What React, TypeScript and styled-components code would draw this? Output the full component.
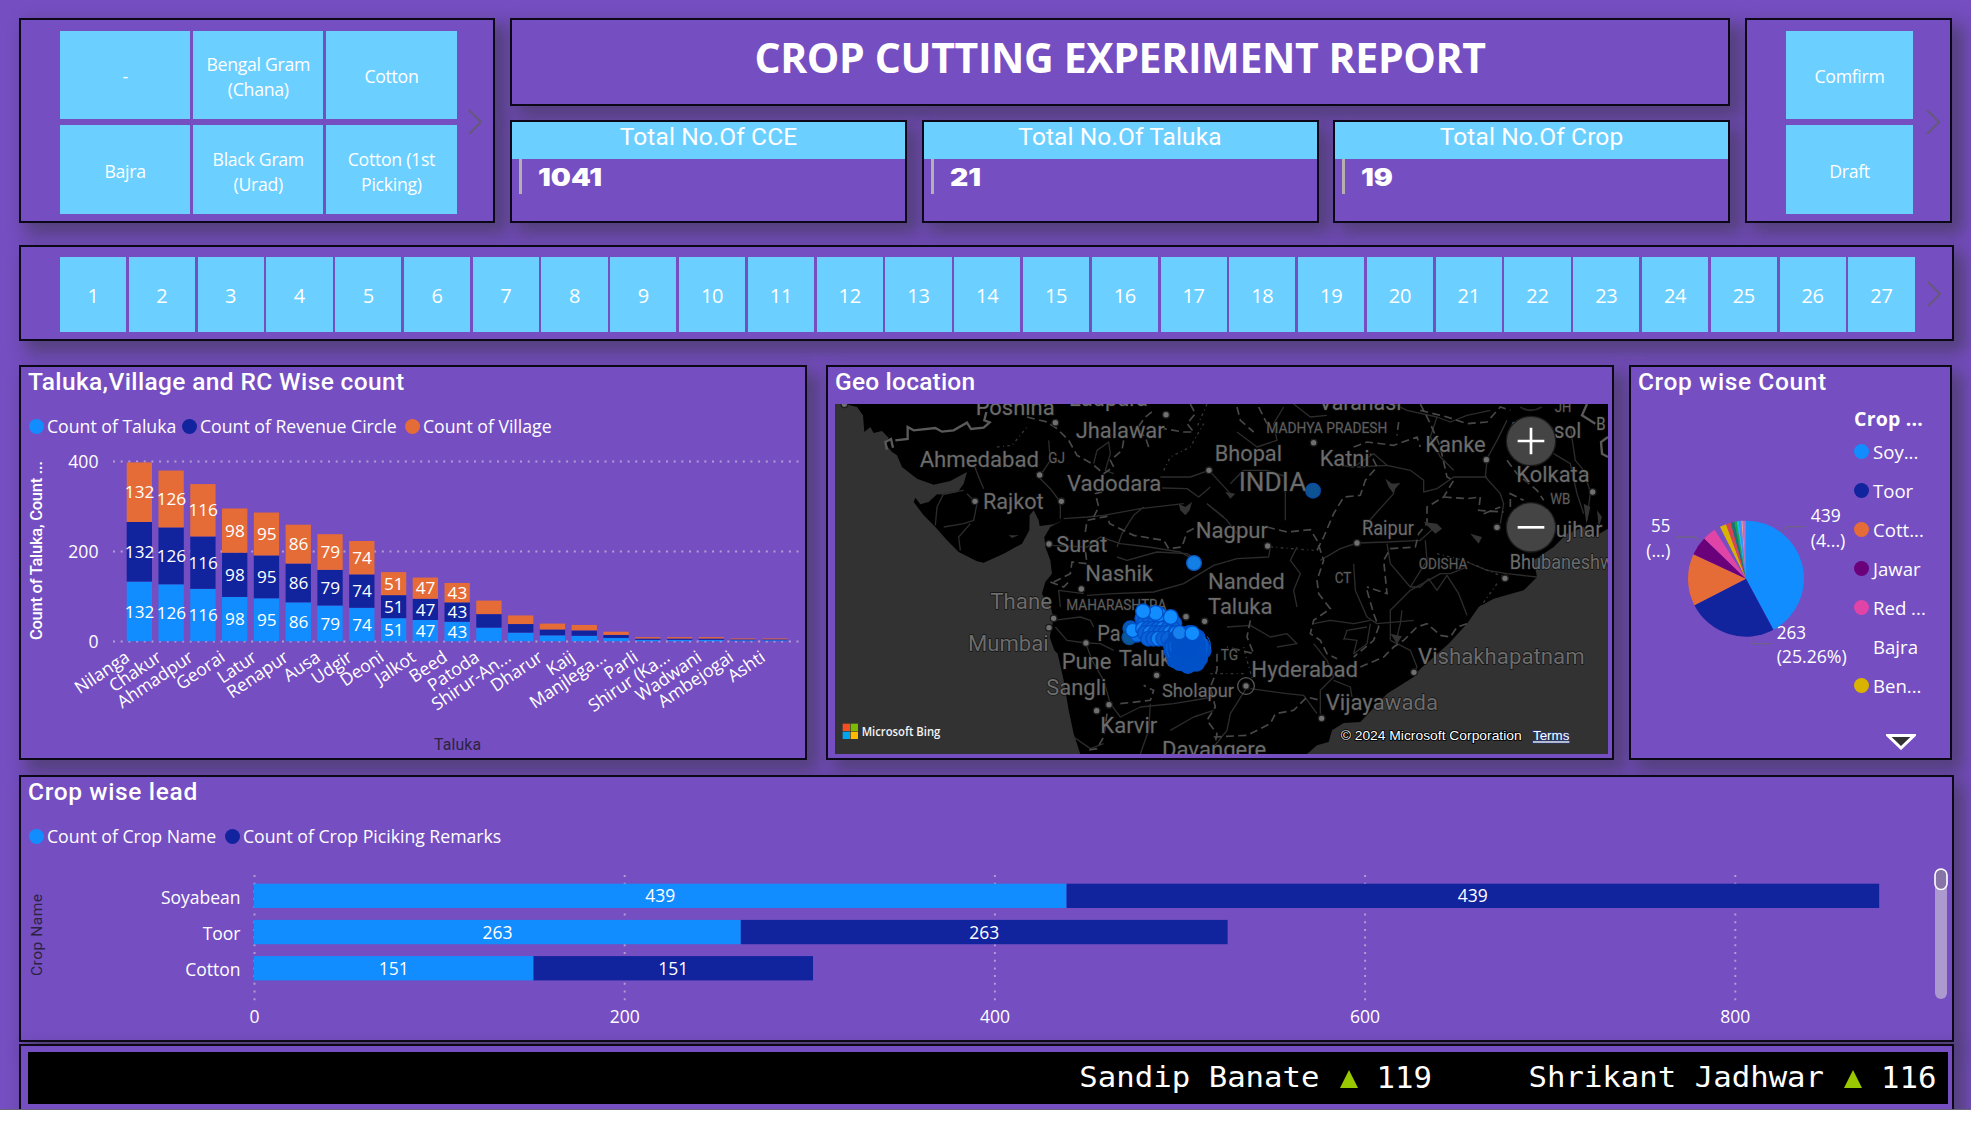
import React from "react";
import styled, { createGlobalStyle } from "styled-components";

const PURPLE = "#754ec1";
const TILE = "#6bcfff";
const BLUE = "#118dff";
const NAVY = "#12239e";
const ORANGE = "#e66c37";
const UI = '"Open Sans", "Noto Sans", sans-serif';
const DIN = 'Roboto, "Liberation Sans", sans-serif';
const MONO = '"DejaVu Sans Mono", monospace';

const Global = createGlobalStyle`
  body { margin: 0; background: #fff; }
  * { box-sizing: border-box; }
`;

const Page = styled.main`
  width: 1971px;
  height: 1109.5px;
  padding: 18px 17px 0 19px;
  display: flex;
  flex-direction: column;
  overflow: hidden;
  background: ${PURPLE};
  border-bottom: 1px solid #68627a;
  font-family: ${UI};
  color: #fff;
`;

const Panel = styled.section<{ $w?: number; $h?: number }>`
  width: ${(p) => (p.$w ? `${p.$w}px` : "auto")};
  height: ${(p) => (p.$h ? `${p.$h}px` : "auto")};
  flex: none;
  background: ${PURPLE};
  border: 2px solid #0d0818;
  box-shadow: 9px 9px 16px 3px rgba(50, 50, 50, 0.48);
`;

const TopRow = styled.div`
  display: flex;
  gap: 15px;
  height: 205px;
  margin-bottom: 22px;
`;

const SlicerPanel = styled(Panel)<{ $pad: string }>`
  display: flex;
  align-items: center;
  padding: ${(p) => p.$pad};
`;

const TileGrid = styled.div<{ $cols: number; $gap: string }>`
  display: grid;
  flex: 1;
  height: 100%;
  grid-template-columns: repeat(${(p) => p.$cols}, 1fr);
  gap: ${(p) => p.$gap};
`;

const Tile = styled.button<{ $size: number; $drop: number }>`
  border: 0;
  padding: ${(p) => p.$drop}px 7px 0;
  min-width: 0;
  background: ${TILE};
  color: #fff;
  font: 400 ${(p) => p.$size}px/25px ${UI};
  letter-spacing: -0.3px;
`;

const ChevronSlot = styled.span<{ $ml: number }>`
  display: flex;
  width: 14px;
  margin-left: ${(p) => p.$ml}px;
`;

const Middle = styled.div`
  width: 1220px;
  display: flex;
  flex-direction: column;
  gap: 14px;
`;

const Banner = styled(Panel)`
  display: flex;
  justify-content: center;
`;

const BannerTitle = styled.h1`
  margin: 9.5px 0 0;
  font: 700 41px/54px ${UI};
  letter-spacing: -0.37px;
  white-space: nowrap;
`;

const Cards = styled.div`
  display: flex;
  justify-content: space-between;
`;

const CardHead = styled.h2`
  margin: 0;
  height: 37px;
  background: ${TILE};
  text-align: center;
  font: 400 24.5px/29px ${DIN};
  letter-spacing: 0.1px;
`;

const CardBody = styled.div`
  margin-left: 7px;
  height: 35px;
  border-left: 3px solid #b3b0ad;
  padding-left: 16px;
  font: 900 24px/37px Inter, ${UI};
`;

const CardValue = styled.span`
  display: inline-block;
  transform: scaleX(1.18);
  transform-origin: left;
`;

const ReportRow = styled.div`
  display: flex;
  height: 395px;
  margin: 24px 0 15px;
`;

const ReportPanel = styled(Panel)<{ $ml?: number }>`
  display: flex;
  flex-direction: column;
  margin-left: ${(p) => p.$ml ?? 0}px;
`;

const PanelTitle = styled.h2<{ $ls?: number }>`
  margin: 0 0 0 7px;
  height: 36px;
  font: 500 24.5px/29px ${DIN};
  letter-spacing: ${(p) => p.$ls ?? 0.37}px;
  white-space: nowrap;
`;

const Legend = styled.div`
  display: flex;
  height: 42px;
  margin-left: 8px;
  padding-top: 4px;
  gap: 9px;
  font-size: 17.7px;
  line-height: 24px;
  white-space: nowrap;
`;

const Key = styled.span<{ $w?: number }>`
  display: flex;
  align-items: center;
  gap: 3px;
  letter-spacing: -0.02px;
  width: ${(p) => (p.$w ? `${p.$w}px` : "auto")};
`;

const Dot = styled.i<{ $c: string }>`
  width: 15px;
  height: 15px;
  border-radius: 50%;
  flex: none;
  background: ${(p) => p.$c};
`;

const Chart = styled.svg`
  display: block;
  flex: none;
  font-family: ${UI};
`;

const PieBody = styled.div`
  display: flex;
  flex: 1;
`;

const PieLegend = styled.div`
  display: flex;
  flex-direction: column;
  width: 96px;
  padding-top: 2px;
  font-size: 18.6px;
`;

const PieLegendTitle = styled.strong`
  font: 700 19.5px/28px ${UI};
  height: 31px;
  letter-spacing: 0.2px;
`;

const PieKey = styled.span`
  display: flex;
  align-items: center;
  gap: 4px;
  height: 39.1px;
  padding-bottom: 9px;
`;

const More = styled.svg`
  margin: 24px 0 0 32px;
`;

const MapFrame = styled.div`
  width: 773px;
  height: 350px;
  margin: 0.5px 0 0 7px;
  background: #323232;
`;

const TickerPanel = styled(Panel)`
  margin-top: 1.5px;
  padding: 6.5px 4.5px 0 6.5px;
`;

const TickerBand = styled.div`
  display: flex;
  justify-content: flex-end;
  align-items: center;
  height: 52px;
  padding-right: 11px;
  background: #000;
`;

const TickerItem = styled.div`
  display: flex;
  align-items: center;
  margin-left: 96.5px;
  white-space: pre;
`;

const TickerName = styled.span`
  font: 30.7px/44px ${MONO};
  transform: scaleY(0.94);
`;

const TickerArrow = styled.i`
  margin: 2px 19px 0 20px;
  border: 9px solid transparent;
  border-top: 0;
  border-bottom: 18px solid #99c700;
`;

const TickerValue = styled.span`
  font: 30.7px/44px ${MONO};
`;

const Chevron = () => (
  <svg width="14" height="26" viewBox="0 0 14 26" fill="none" stroke="#66597c" strokeWidth="2">
    <path d="M1 1 L13 13 L1 25" />
  </svg>
);

const crops = ["-", "Bengal Gram (Chana)", "Cotton", "Bajra", "Black Gram (Urad)", "Cotton (1st Picking)"];
const cards: [string, string][] = [
  ["Total No.Of CCE", "1041"],
  ["Total No.Of Taluka", "21"],
  ["Total No.Of Crop", "19"],
];

const talukas: [string, number][] = [
  ["Nilanga", 132], ["Chakur", 126], ["Ahmadpur", 116], ["Georai", 98], ["Latur", 95], ["Renapur", 86],
  ["Ausa", 79], ["Udgir", 74], ["Deoni", 51], ["Jalkot", 47], ["Beed", 43], ["Patoda", 30],
  ["Shirur-An...", 19], ["Dharur", 13], ["Kaij", 12], ["Manjlega...", 7], ["Parli", 3], ["Shirur (Ka...", 3],
  ["Wadwani", 3], ["Ambejogai", 2], ["Ashti", 2],
];

const ColumnChart = () => {
  const k = 0.4515;
  return (
    <Chart width="784" height="313" viewBox="21 445 784 313" fill="#fff">
      {[400, 200, 0].map((v) => {
        const y = 641.6 - v * 0.45;
        return (
          <g key={v}>
            <line x1="113" x2="801" y1={y} y2={y} stroke="#b29fd2" strokeWidth="2" strokeDasharray="2 5.68" />
            <text x="98.5" y={y + 6.2} textAnchor="end" fontSize="17.6">{v}</text>
          </g>
        );
      })}
      {talukas.map(([name, n], i) => {
        const x = 126.7 + i * 31.78;
        const h = n * k;
        return (
          <g key={name}>
            {[BLUE, NAVY, ORANGE].map((c, j) => (
              <g key={c}>
                <rect x={x} y={641.2 - h * (j + 1)} width="25.3" height={h} fill={c} />
                {n > 40 && (
                  <text x={x + 12.9} y={641.2 - h * (j + 0.5) + 6.2} textAnchor="middle" fontSize="17.2">{n}</text>
                )}
              </g>
            ))}
            <text transform={`translate(${x + 4.2} 660) rotate(-34)`} textAnchor="end" fontSize="17.5">{name}</text>
          </g>
        );
      })}
      <text transform="translate(42 640) rotate(-90)" fontFamily={DIN} fontWeight="500" fontSize="16.5" textLength="179">Count of Taluka, Count ...</text>
      <text x="434" y="750" fontFamily={DIN} fontSize="15.8" textLength="47" fill="#2c2340">Taluka</text>
    </Chart>
  );
};

type Label = [string, number, number, number, number?];
const mapLabels: Label[] = [
  ["Poshina", 468, 163, 237], ["Ladpura", 748, 138, 237], ["Jhalawar", 768, 233, 267],
  ["Ahmedabad", 300, 320, 358], ["GJ", 686, 308, 50, 42], ["Rajkot", 490, 446, 182],
  ["Vadodara", 742, 393, 283], ["Surat", 710, 574, 153], ["Nashik", 797, 661, 203],
  ["Thane", 512, 746, 185], ["MAHARASHTRA", 740, 750, 300, 42], ["Mumbai", 445, 871, 242],
  ["Pa", 833, 842, 70], ["Pune", 726, 925, 149], ["Taluka", 897, 916, 193], ["Sangli", 680, 1003, 180],
  ["Karvir", 842, 1119, 171], ["Sholapur", 1027, 1010, 216, 54], ["Davangere", 1027, 1190, 313],
  ["Varanasi", 1497, 150, 248], ["MADHYA PRADESH", 1340, 219, 363, 42], ["Bhopal", 1185, 301, 202],
  ["Katni", 1500, 316, 150], ["Kanke", 1817, 274, 181], ["Asansol", 2062, 234, 223], ["JH", 2205, 155, 50, 42],
  ["B", 2330, 208, 28, 52], ["INDIA", 1257, 393, 203, 74], ["Kolkata", 2090, 366, 220], ["WB", 2192, 430, 60, 42],
  ["Nagpur", 1128, 533, 217], ["Raipur", 1627, 524, 156, 58], ["ujhar", 2208, 529, 140],
  ["Bhubaneshwar", 2070, 627, 360, 58], ["ODISHA", 1797, 626, 146, 42], ["CT", 1545, 667, 50, 42],
  ["Nanded", 1165, 686, 230], ["Taluka", 1165, 760, 193], ["TG", 1203, 900, 52, 42],
  ["Hyderabad", 1295, 950, 320], ["Vijayawada", 1518, 1050, 337], ["Vishakhapatnam", 1795, 912, 500],
];

const towns = [
  [1037, 163], [705, 187], [658, 344], [464, 423], [723, 423], [686, 551], [783, 686], [700, 774], [686, 802],
  [797, 848], [1009, 945], [866, 1033], [829, 1051], [1166, 330], [1097, 769], [1153, 783], [72, 132], [1480, 247],
  [1998, 298], [2317, 395], [1342, 557], [1610, 548], [2030, 501], [2054, 654], [1277, 977], [1781, 936], [1504, 1074],
];

const stateBorders = [
  "M620 170 L680 185 L710 205 L745 240 L770 285 L815 310 L850 340 L880 320 L870 300 L905 270 L910 240",
  "M985 260 L975 230 L950 205 L975 170 L1000 150 M1110 131 L1125 160 L1100 190 L1120 215 L1090 215 L1030 205",
  "M820 470 L835 440 L825 400 L845 395 M795 515 L800 480 L860 468 L868 490 L940 525 L1030 540 L1045 565 L1085 560 L1100 515 L1130 500",
  "M700 665 L750 640 L755 605 L800 610 L795 570 M690 665 L730 680 L745 665",
  "M1340 500 L1400 515 L1470 508 L1490 540 L1510 600 L1490 660 L1495 700 L1530 745 L1480 780 L1470 820 L1500 840 L1520 880 L1550 895",
  "M1490 570 L1510 530 L1540 460 L1570 410 L1620 405 L1635 360 L1670 320 L1650 280",
  "M1600 260 L1640 245 L1720 255 L1790 230 L1800 260 M1735 185 L1730 225 M1250 140 L1260 180 L1300 215 M1315 140 L1340 190",
  "M1800 131 L1830 190 L1860 260 L1880 350 L1900 360 L1870 410 L1820 440 L1820 490 L1795 520 L1785 560 L1710 565 L1690 600 L1700 700 L1640 680",
  "M1870 410 L1940 415 L1980 410 L1975 450 L2050 455 M1990 460 L2040 440 M2070 440 L2070 400 L2110 420 M1640 690 L1660 760 L1675 800 L1660 840 L1600 890",
  "M1620 920 L1690 890 L1720 860 L1750 840 L1790 800 L1820 790 L1860 825 L1890 830 L1910 800 L1940 790",
  "M1290 780 L1280 830 L1300 880 L1260 870 L1220 860 M1190 880 L1190 930 L1170 980 L1185 1040 L1160 1080 L1190 1120 L1180 1170",
  "M900 1030 L990 1020 L1000 990 L970 975 M860 1060 L850 1130 L830 1165 L800 1170 M1180 1130 L1280 1125 L1350 1090 L1365 1060 L1420 1050 L1460 1010 L1500 1020",
  "M1800 150 L1880 170 L1940 190 L2000 185 L2040 140 L2070 150 M2060 300 L2090 340 L2150 390 L2170 420",
];

const roads = [
  "M655 350 L690 385 L720 425 L720 475 M460 310 L475 350 L490 385 M685 240 L690 300 L660 345",
  "M345 495 L350 440 L370 400 L430 390 M370 500 L430 490 L460 480 L470 430 L440 400 M420 570 L415 530 L450 490",
  "M820 310 L830 270 L865 245 L870 280 L855 330 L880 340 M1166 330 L1110 350 L1020 350 M1025 383 L1100 385 L1135 410 L1170 380",
  "M730 475 L800 470 L850 465 L960 445 L1090 430 M890 560 L905 520 L940 465 L970 440 M690 555 L800 560 L840 530 L900 550 L985 560 L1080 575 L1140 610",
  "M800 705 L880 700 L1000 695 L1090 670 L1180 615 L1250 595 L1345 590 L1350 560 M1160 430 L1220 480 L1250 520",
  "M700 780 L780 770 L810 780 L820 800 M705 800 L740 840 L797 848 L840 850 L880 870 M720 740 L715 690 L790 700",
  "M797 850 L815 900 L850 960 L870 1030 L900 1070 L960 1040 L1060 1030 L1180 1010 M990 1030 L985 1110 L960 1181 M760 1130 L810 1165 L850 1150",
  "M890 590 L920 600 L1010 575 L1100 580 L1130 600 M1050 1110 L1120 1070 L1180 1050",
  "M1230 370 L1270 330 L1340 330 L1400 350 M1395 370 L1395 480 M1166 330 L1230 400 M1340 330 L1345 390 M1160 430 L1210 470",
  "M1250 215 L1310 260 L1370 240 L1360 190 L1390 140 M1420 131 L1470 170 L1520 165 M1610 320 L1700 315 L1770 330 L1810 360 L1810 395 L1850 385 L1900 350 L2000 350",
  "M1700 315 L1660 280 L1600 320 L1560 315 M1630 500 L1670 455 L1720 400 L1715 370 M2000 300 L1995 350 L2040 400 L2050 430 L2040 490",
  "M1500 600 L1560 565 L1610 548 L1700 545 L1800 540 L1850 495 M1600 610 L1605 690 L1640 770 L1670 790 L1780 780 M1710 840 L1710 750 L1770 690 L1860 640 L1890 640 L1940 620",
  "M1700 550 L1710 610 L1770 680 L1800 680 L1825 655 L1850 690 L1880 645 L1915 700 L1940 765 M1815 540 L1820 600 L1770 680 M1940 605 L2000 630 L2060 640 L2150 650",
  "M1430 560 L1410 600 L1440 640 L1420 690 L1430 740 M1220 800 L1290 795 L1350 830 L1400 820 L1430 850 L1370 860 M1480 790 L1530 780 L1600 790 L1650 780",
  "M1480 850 L1520 900 L1540 950 L1500 990 L1500 1060 M1570 840 L1580 810 L1640 800 M1570 835 L1610 840 L1600 880 L1640 850 L1650 790 M1710 840 L1770 870 L1790 920 L1780 936",
  "M1290 985 L1400 1000 L1450 1005 L1490 1060 M1277 985 L1230 1060 L1220 1110 L1180 1160 M1540 960 L1590 980 L1595 1010 M1745 750 L1740 790 L1730 830",
  "M1850 170 L1890 185 L1940 165 L2010 150 M1720 131 L1760 150 L1850 170 L1830 230 L1860 290 L1900 330 M2060 180 L2030 240 L1998 298 M2250 200 L2265 300 L2290 330 L2310 395 L2300 480 M2200 280 L2250 310 L2270 400 L2290 460",
];

/* Field-visit markers: the Beed group row by row, then the denser Latur group as a disc. */
const beed: number[][] = [];
[[966, 1044, 772], [968, 1058, 788], [968, 1066, 804], [970, 1072, 818], [984, 1050, 832]].forEach(([from, to, y], r) => {
  for (let x = from; x <= to; x += 15) {
    beed.push([x + (r % 2) * 4, y + ((x * 7) % 5)]);
  }
});
const latur: number[][] = [];
for (let i = 0; i < 60; i += 1) {
  const a = i * 2.4;
  const r = Math.sqrt(i / 60) * 50;
  latur.push([1101 + Math.cos(a) * r, 868 + Math.sin(a) * r * 1.02]);
}

const GeoMap = () => (
  <Chart width="773" height="350" viewBox="44 131 2319 1050">
    <path
      fill="#000"
      d="M75 131 L110 140 L128 165 L132 215 L150 200 L160 218 L185 212 L205 232 L195 250 L215 275 L230 285 L245 320 L290 355 L340 373 L390 362 L440 335 L430 370 L412 395 L375 403 L350 402 L325 425 L300 432 L285 412 L280 425 L310 465 L345 500 L380 540 L415 575 L470 603 L490 607 L550 580 L605 550 L627 510 L628 465 L640 450 L655 480 L658 497 L700 492 L728 480 L690 500 L672 530 L675 560 L690 600 L695 640 L675 665 L665 700 L675 720 L690 735 L700 775 L688 830 L702 870 L712 880 L730 960 L745 1050 L760 1120 L780 1181 L1460 1181 L1490 1155 L1525 1145 L1535 1110 L1570 1088 L1620 1085 L1700 1000 L1780 950 L1800 925 L1885 850 L1940 790 L1975 740 L2020 715 L2110 690 L2150 650 L2140 600 L2200 560 L2240 520 L2290 500 L2320 530 L2363 505 L2363 131 Z"
    />
    <g fill="none" stroke="#2c2c2c" strokeWidth="4" strokeLinejoin="round">
      {roads.map((d) => <path key={d} d={d} />)}
      <path stroke="#363636" strokeDasharray="8 10 3 10" d="M530 260 L575 255 L620 200 M1030 330 L1050 290 L1110 260 L1150 190 M1160 131 L1130 200 M1350 560 L1480 570 M1270 940 L1170 940 M1300 970 L1280 900 L1270 860 M1850 580 L1930 600 L2050 650 M2030 670 L1980 740" />
    </g>
    <g fill="none" stroke="#484848" strokeWidth="5" strokeDasharray="24 13">
      {stateBorders.map((d) => <path key={d} d={d} />)}
    </g>
    <path fill="none" stroke="#5a5a5a" strokeWidth="7" d="M200 268 L195 245 L212 236 L218 262 M225 240 L262 236 L262 200 L280 210 L345 203 L365 214 L400 210 L440 187 L452 206 L490 202 L508 186 L492 180 L498 155 M2300 131 L2285 165 L2325 190 M2363 230 L2342 245 L2345 280 L2363 290" />
    <g fill="#333">
      <path d="M1075 430 L1095 440 L1115 425 L1108 450 L1095 465 L1080 450 Z M1695 355 L1715 370 L1740 368 L1725 385 L1720 400 L1705 380 Z M1810 485 L1850 490 L1865 505 L1845 520 L1830 505 Z M1950 520 L1985 530 L1975 550 Z M1215 395 L1245 400 L1230 415 Z M1710 820 L1745 828 L1730 850 Z M565 525 L595 525 L575 533 Z" />
      <path d="M2290 430 L2310 440 L2298 490 Z M2330 450 L2345 470 L2335 500 Z" />
    </g>
    <g stroke="#111" strokeWidth="4" paintOrder="stroke" strokeLinejoin="round" fontFamily={DIN}>
      {mapLabels.map(([t, x, y, w, s]) => (
        <text
          key={`${t}${x}`}
          x={x - 2}
          y={y}
          textLength={w}
          lengthAdjust="spacingAndGlyphs"
          fontSize={s ? s * 1.03 : 67}
          fill={s === 42 ? "#5e5e5e" : "#6c6c6c"}
        >
          {t}
        </text>
      ))}
    </g>
    <g fill="#707070" stroke="#1c1c1c" strokeWidth="4">
      {towns.map(([x, y]) => <circle key={`${x}-${y}`} cx={x} cy={y} r="10" />)}
    </g>
    <circle cx="1277" cy="977" r="25" fill="none" stroke="#555" strokeWidth="4" />
    <circle cx="1121" cy="608" r="22" fill="#137fe4" stroke="#0b59c6" strokeWidth="4" />
    <circle cx="1478" cy="391" r="22" fill="#0d5292" stroke="#0a4aa6" strokeWidth="4" />
    <g stroke="#0050c8" strokeWidth="4">
      <circle cx="930" cy="804" r="22" fill="#0d5ba6" />
      <circle cx="927" cy="831" r="22" fill="#0a5799" stroke="#07478f" />
      <circle cx="950" cy="824" r="21" fill="#0c6fe0" />
      <circle cx="937" cy="810" r="21" fill={BLUE} />
      {beed.map(([x, y], i) => <circle key={i} cx={x} cy={y} r="22" fill={i % 4 === 1 ? "#1180f0" : "#0a62d8"} />)}
      {[[1016, 762], [1051, 770], [1006, 758], [968, 753], [1068, 818]].map(([x, y]) => (
        <circle key={x} cx={x} cy={y} r="22" fill={BLUE} />
      ))}
      {latur.map(([x, y], i) => <circle key={i} cx={x} cy={y} r="23" fill="#0050c8" />)}
      <g fill="none" stroke="#0b66dc" strokeWidth="3">
        <path d="M1040 850 q-4 22 6 40 M1050 845 q-3 15 2 28 M1150 830 q16 18 8 44 M1160 828 q14 18 9 38" />
      </g>
      <circle cx="1077" cy="817" r="21" fill="#1580ee" />
      <circle cx="1116" cy="819" r="22" fill={BLUE} />
    </g>
    {[242, 501].map((y) => (
      <g key={y}>
        <circle cx="2132" cy={y} r="76" fill="#1c1c1c" />
        <circle cx="2132" cy={y} r="72" fill="#444" />
        <path d={`M2092 ${y} h80 ${y === 242 ? `M2132 ${y - 40} v80` : ""}`} stroke="#fff" strokeWidth="8" />
      </g>
    ))}
    <path d="M2100 140 q32 20 64 0" fill="none" stroke="#252525" strokeWidth="6" />
    <rect x="67" y="1090" width="22" height="22" fill="#f25022" />
    <rect x="91" y="1090" width="22" height="22" fill="#7fba00" />
    <rect x="67" y="1114" width="22" height="22" fill="#00a4ef" />
    <rect x="91" y="1114" width="22" height="22" fill="#ffb900" />
    <text x="124" y="1127" fontSize="39" fontWeight="600" textLength="236" lengthAdjust="spacingAndGlyphs" fill="#f4f4f4">Microsoft Bing</text>
    <g fontFamily='"Liberation Sans", sans-serif' fontSize="39" fill="#fff" stroke="#000" strokeWidth="5" paintOrder="stroke">
      <text x="1561" y="1140" textLength="543" lengthAdjust="spacingAndGlyphs">© 2024 Microsoft Corporation</text>
      <text x="2138" y="1140" textLength="109" lengthAdjust="spacingAndGlyphs" stroke="#2a3a78" textDecoration="underline">Terms</text>
    </g>
  </Chart>
);

const slices: [number, string][] = [
  [151.8, BLUE], [242.8, NAVY], [295, ORANGE], [313.9, "#6b007b"], [327.3, "#e044a7"], [333.3, "transparent"],
  [339.9, "#d9b300"], [344.8, "#d64550"], [348.4, "#197278"], [350.8, "#1aab40"], [353, "#15c6f4"],
  [355.3, "#4092ff"], [356.7, "#ee9e9e"], [358.9, "#c070c8"], [360, "#9a7f99"],
];

const PieChart = () => {
  const at = (deg: number) => {
    const a = (deg * Math.PI) / 180;
    return `${408 + 174 * Math.sin(a)} ${686 - 174 * Math.cos(a)}`;
  };
  return (
    <Chart width="223" height="355" viewBox="63 159 669 1065" fill="#fff" fontSize="52">
      {slices.map(([end, c], i) => (
        <path key={end} fill={c} d={`M408 686 L${at(i ? slices[i - 1][0] : 0)} A174 174 0 0 1 ${at(end)} Z`} />
      ))}
      <path d="M516 545 L530 530 H585 M198 561 H254 L270 573 M425 864 V881 H484" fill="none" stroke="#6f6288" strokeWidth="4" />
      <text x="602" y="516" textLength="90" lengthAdjust="spacingAndGlyphs">439</text>
      <text x="602" y="591" textLength="104" lengthAdjust="spacingAndGlyphs">(4...)</text>
      <text x="123" y="546" textLength="58" lengthAdjust="spacingAndGlyphs">55</text>
      <text x="109" y="621" textLength="72" lengthAdjust="spacingAndGlyphs">(...)</text>
      <text x="500" y="866" textLength="88" lengthAdjust="spacingAndGlyphs">263</text>
      <text x="500" y="940" textLength="210" lengthAdjust="spacingAndGlyphs">(25.26%)</text>
    </Chart>
  );
};

const pieKeys: [string, string][] = [
  ["Soy...", BLUE], ["Toor", NAVY], ["Cott...", ORANGE], ["Jawar", "#6b007b"], ["Red ...", "#e044a7"],
  ["Bajra", "transparent"], ["Ben...", "#d9b300"],
];

const LeadChart = () => (
  <Chart width="1930" height="185" viewBox="21 855 1930 185" fill="#fff" fontSize="17.5">
    {[0, 200, 400, 600, 800].map((v) => {
      const x = 254.5 + v * 1.851;
      return (
        <g key={v}>
          <line x1={x} x2={x} y1="875" y2="1001" stroke="#b09cd2" strokeWidth="2" strokeDasharray="2 5.7" />
          <text x={x} y="1022.5" textAnchor="middle">{v}</text>
        </g>
      );
    })}
    {([["Soyabean", 439], ["Toor", 263], ["Cotton", 151]] as [string, number][]).map(([name, n], i) => {
      const y = 883.7 + i * 36.2;
      const w = n * 1.851;
      return (
        <g key={name}>
          <text x="240.5" y={y + 20} textAnchor="end">{name}</text>
          <rect x="254" y={y} width={w} height="24.3" fill={BLUE} />
          <rect x={254 + w} y={y} width={w} height="24.3" fill={NAVY} />
          <text x={254 + w / 2} y={y + 18.7} textAnchor="middle">{n}</text>
          <text x={254 + w * 1.5} y={y + 18.7} textAnchor="middle">{n}</text>
        </g>
      );
    })}
    <text transform="translate(41.5 976) rotate(-90)" fontFamily={DIN} fontSize="15.5" textLength="82" fill="#2c2340">Crop Name</text>
    <rect x="1935" y="869" width="12" height="130" rx="6" fill="#ab99d0" />
    <rect x="1935" y="869" width="12" height="20.5" rx="6" fill="#8574a5" stroke="#fff" strokeWidth="1.6" />
  </Chart>
);

export default function App() {
  return (
    <>
      <Global />
      <Page>
        <TopRow>
          <SlicerPanel $w={476} $pad="10.5px 11px 7px 39px">
            <TileGrid $cols={3} $gap="6px 3px">
              {crops.map((c) => <Tile key={c} $size={17.7} $drop={4}>{c}</Tile>)}
            </TileGrid>
            <ChevronSlot $ml={11.5}><Chevron /></ChevronSlot>
          </SlicerPanel>
          <Middle>
            <Banner $h={88}>
              <BannerTitle>CROP CUTTING EXPERIMENT REPORT</BannerTitle>
            </Banner>
            <Cards>
              {cards.map(([label, value]) => (
                <Panel key={label} $w={397} $h={103}>
                  <CardHead>{label}</CardHead>
                  <CardBody><CardValue>{value}</CardValue></CardBody>
                </Panel>
              ))}
            </Cards>
          </Middle>
          <SlicerPanel $w={207} $pad="10.5px 10px 7px 39px">
            <TileGrid $cols={1} $gap="6px">
              {["Comfirm", "Draft"].map((c) => <Tile key={c} $size={17.7} $drop={4}>{c}</Tile>)}
            </TileGrid>
            <ChevronSlot $ml={13}><Chevron /></ChevronSlot>
          </SlicerPanel>
        </TopRow>

        <SlicerPanel $h={96} $pad="10px 11px 7.5px 39px">
          <TileGrid $cols={27} $gap="2.6px">
            {Array.from({ length: 27 }, (_, i) => <Tile key={i} $size={20} $drop={2}>{i + 1}</Tile>)}
          </TileGrid>
          <ChevronSlot $ml={12.5}><Chevron /></ChevronSlot>
        </SlicerPanel>

        <ReportRow>
          <ReportPanel $w={788} $h={395}>
            <PanelTitle>Taluka,Village and RC Wise count</PanelTitle>
            <Legend>
              <Key $w={144}><Dot $c={BLUE} />Count of Taluka</Key>
              <Key $w={214}><Dot $c={NAVY} />Count of Revenue Circle</Key>
              <Key><Dot $c={ORANGE} />Count of Village</Key>
            </Legend>
            <ColumnChart />
          </ReportPanel>
          <ReportPanel $w={788} $h={395} $ml={19}>
            <PanelTitle $ls={0.2}>Geo location</PanelTitle>
            <MapFrame><GeoMap /></MapFrame>
          </ReportPanel>
          <ReportPanel $w={323} $h={395} $ml={15}>
            <PanelTitle $ls={0.6}>Crop wise Count</PanelTitle>
            <PieBody>
              <PieChart />
              <PieLegend>
                <PieLegendTitle>Crop ...</PieLegendTitle>
                {pieKeys.map(([name, c]) => <PieKey key={name}><Dot $c={c} />{name}</PieKey>)}
                <More width="30" height="16" viewBox="0 0 30 16">
                  <path d="M2 1.5 H28 L15 14 Z" fill="#333" stroke="#fff" strokeWidth="3" />
                </More>
              </PieLegend>
            </PieBody>
          </ReportPanel>
        </ReportRow>

        <ReportPanel $h={267}>
          <PanelTitle $ls={0.65}>Crop wise lead</PanelTitle>
          <Legend>
            <Key $w={187}><Dot $c={BLUE} />Count of Crop Name</Key>
            <Key><Dot $c={NAVY} />Count of Crop Piciking Remarks</Key>
          </Legend>
          <LeadChart />
        </ReportPanel>

        <TickerPanel $h={90}>
          <TickerBand>
            {[["Sandip Banate", "119"], ["Shrikant Jadhwar", "116"]].map(([name, value]) => (
              <TickerItem key={name}>
                <TickerName>{name}</TickerName>
                <TickerArrow />
                <TickerValue>{value}</TickerValue>
              </TickerItem>
            ))}
          </TickerBand>
        </TickerPanel>
      </Page>
    </>
  );
}
